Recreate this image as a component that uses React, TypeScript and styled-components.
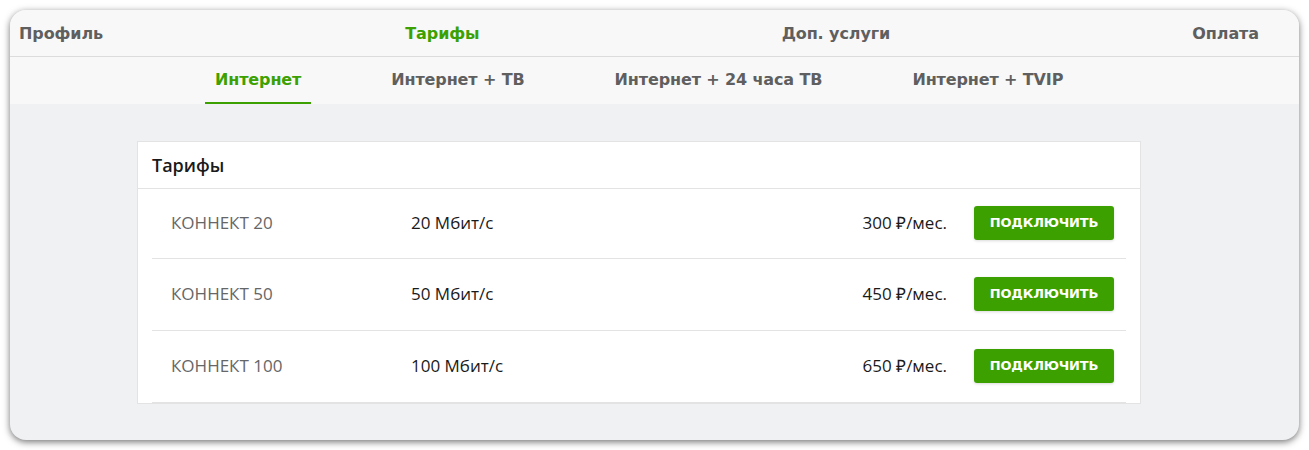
import React from "react";
import styled, { createGlobalStyle } from "styled-components";

const Global = createGlobalStyle`
  html, body { margin: 0; padding: 0; background: #ffffff; }
  body { font-family: "Open Sans", "Noto Sans", sans-serif; }
  * { box-sizing: border-box; }
`;

const Page = styled.div`
  padding: 10px;
  width: 1309px;
  height: 450px;
`;

const Frame = styled.div`
  height: 430px;
  border-radius: 16px;
  overflow: hidden;
  background: #f0f1f3;
  box-shadow: 0 2px 7px rgba(0, 0, 0, 0.55);
  display: flex;
  flex-direction: column;
`;

const TopNav = styled.nav`
  height: 47px;
  background: #f8f8f8;
  border-bottom: 1px solid #dcdcdc;
  display: flex;
  align-items: center;
  justify-content: space-between;
  padding: 0 40px 0 9px;
`;

const NavLink = styled.span<{ $active?: boolean }>`
  font-family: "DejaVu Sans", sans-serif;
  font-weight: bold;
  font-size: 16px;
  letter-spacing: -0.1px;
  color: ${(p) => (p.$active ? "#3ca100" : "#5f5f5f")};
`;

const SubNav = styled.div`
  height: 47px;
  background: #f8f8f8;
  display: flex;
  align-items: stretch;
  padding-left: 195px;
  gap: 70px;
`;

const SubTab = styled.span<{ $active?: boolean }>`
  display: flex;
  align-items: center;
  padding: 0 10px;
  font-family: "DejaVu Sans", sans-serif;
  font-weight: bold;
  font-size: 16px;
  letter-spacing: -0.12px;
  color: ${(p) => (p.$active ? "#3ca100" : "#5f5f5f")};
  border-bottom: 2px solid ${(p) => (p.$active ? "#3ca100" : "transparent")};
`;

const Content = styled.main`
  flex: 1;
  padding: 37px 158px 0 127px;
`;

const Card = styled.section`
  background: #ffffff;
  border: 1px solid #e3e3e3;
`;

const CardHeader = styled.h2`
  margin: 0;
  height: 47px;
  display: flex;
  align-items: center;
  padding-left: 14px;
  font-family: "Open Sans", sans-serif;
  font-size: 18px;
  font-weight: 600;
  color: #1a1a1a;
  border-bottom: 1px solid #e3e3e3;
`;

const Rows = styled.div`
  padding: 0 14px;
`;

const Row = styled.div<{ $first?: boolean }>`
  height: ${(p) => (p.$first ? "70px" : "72px")};
  display: grid;
  grid-template-columns: 240px 1fr auto 140px;
  align-items: center;
  padding: 0 12px 2px 19px;
  border-bottom: 1px solid #e3e3e3;
  font-family: "Open Sans", sans-serif;
  font-size: 17px;
  color: #1a1a1a;
`;

const Name = styled.span`
  color: #666;
`;

const Price = styled.span`
  padding-right: 27px;
`;

const ConnectButton = styled.button`
  width: 140px;
  height: 34px;
  border: none;
  border-radius: 3px;
  background: #3ca100;
  color: #fff;
  font-family: "DejaVu Sans", sans-serif;
  font-weight: bold;
  font-size: 13px;
  letter-spacing: -0.2px;
  box-shadow: 0 1px 3px rgba(0, 0, 0, 0.15);
  cursor: pointer;
`;

const tariffs = [
  { name: "КОННЕКТ 20", speed: "20 Мбит/с", price: "300 ₽/мес." },
  { name: "КОННЕКТ 50", speed: "50 Мбит/с", price: "450 ₽/мес." },
  { name: "КОННЕКТ 100", speed: "100 Мбит/с", price: "650 ₽/мес." },
];

export default function App() {
  return (
    <Page>
      <Global />
      <Frame>
        <TopNav>
          <NavLink>Профиль</NavLink>
          <NavLink $active>Тарифы</NavLink>
          <NavLink>Доп. услуги</NavLink>
          <NavLink>Оплата</NavLink>
        </TopNav>
        <SubNav>
          <SubTab $active>Интернет</SubTab>
          <SubTab>Интернет + ТВ</SubTab>
          <SubTab>Интернет + 24 часа ТВ</SubTab>
          <SubTab>Интернет + TVIP</SubTab>
        </SubNav>
        <Content>
          <Card>
            <CardHeader>Тарифы</CardHeader>
            <Rows>
              {tariffs.map((t, i) => (
                <Row key={t.name} $first={i === 0}>
                  <Name>{t.name}</Name>
                  <span>{t.speed}</span>
                  <Price>{t.price}</Price>
                  <ConnectButton>ПОДКЛЮЧИТЬ</ConnectButton>
                </Row>
              ))}
            </Rows>
          </Card>
        </Content>
      </Frame>
    </Page>
  );
}
